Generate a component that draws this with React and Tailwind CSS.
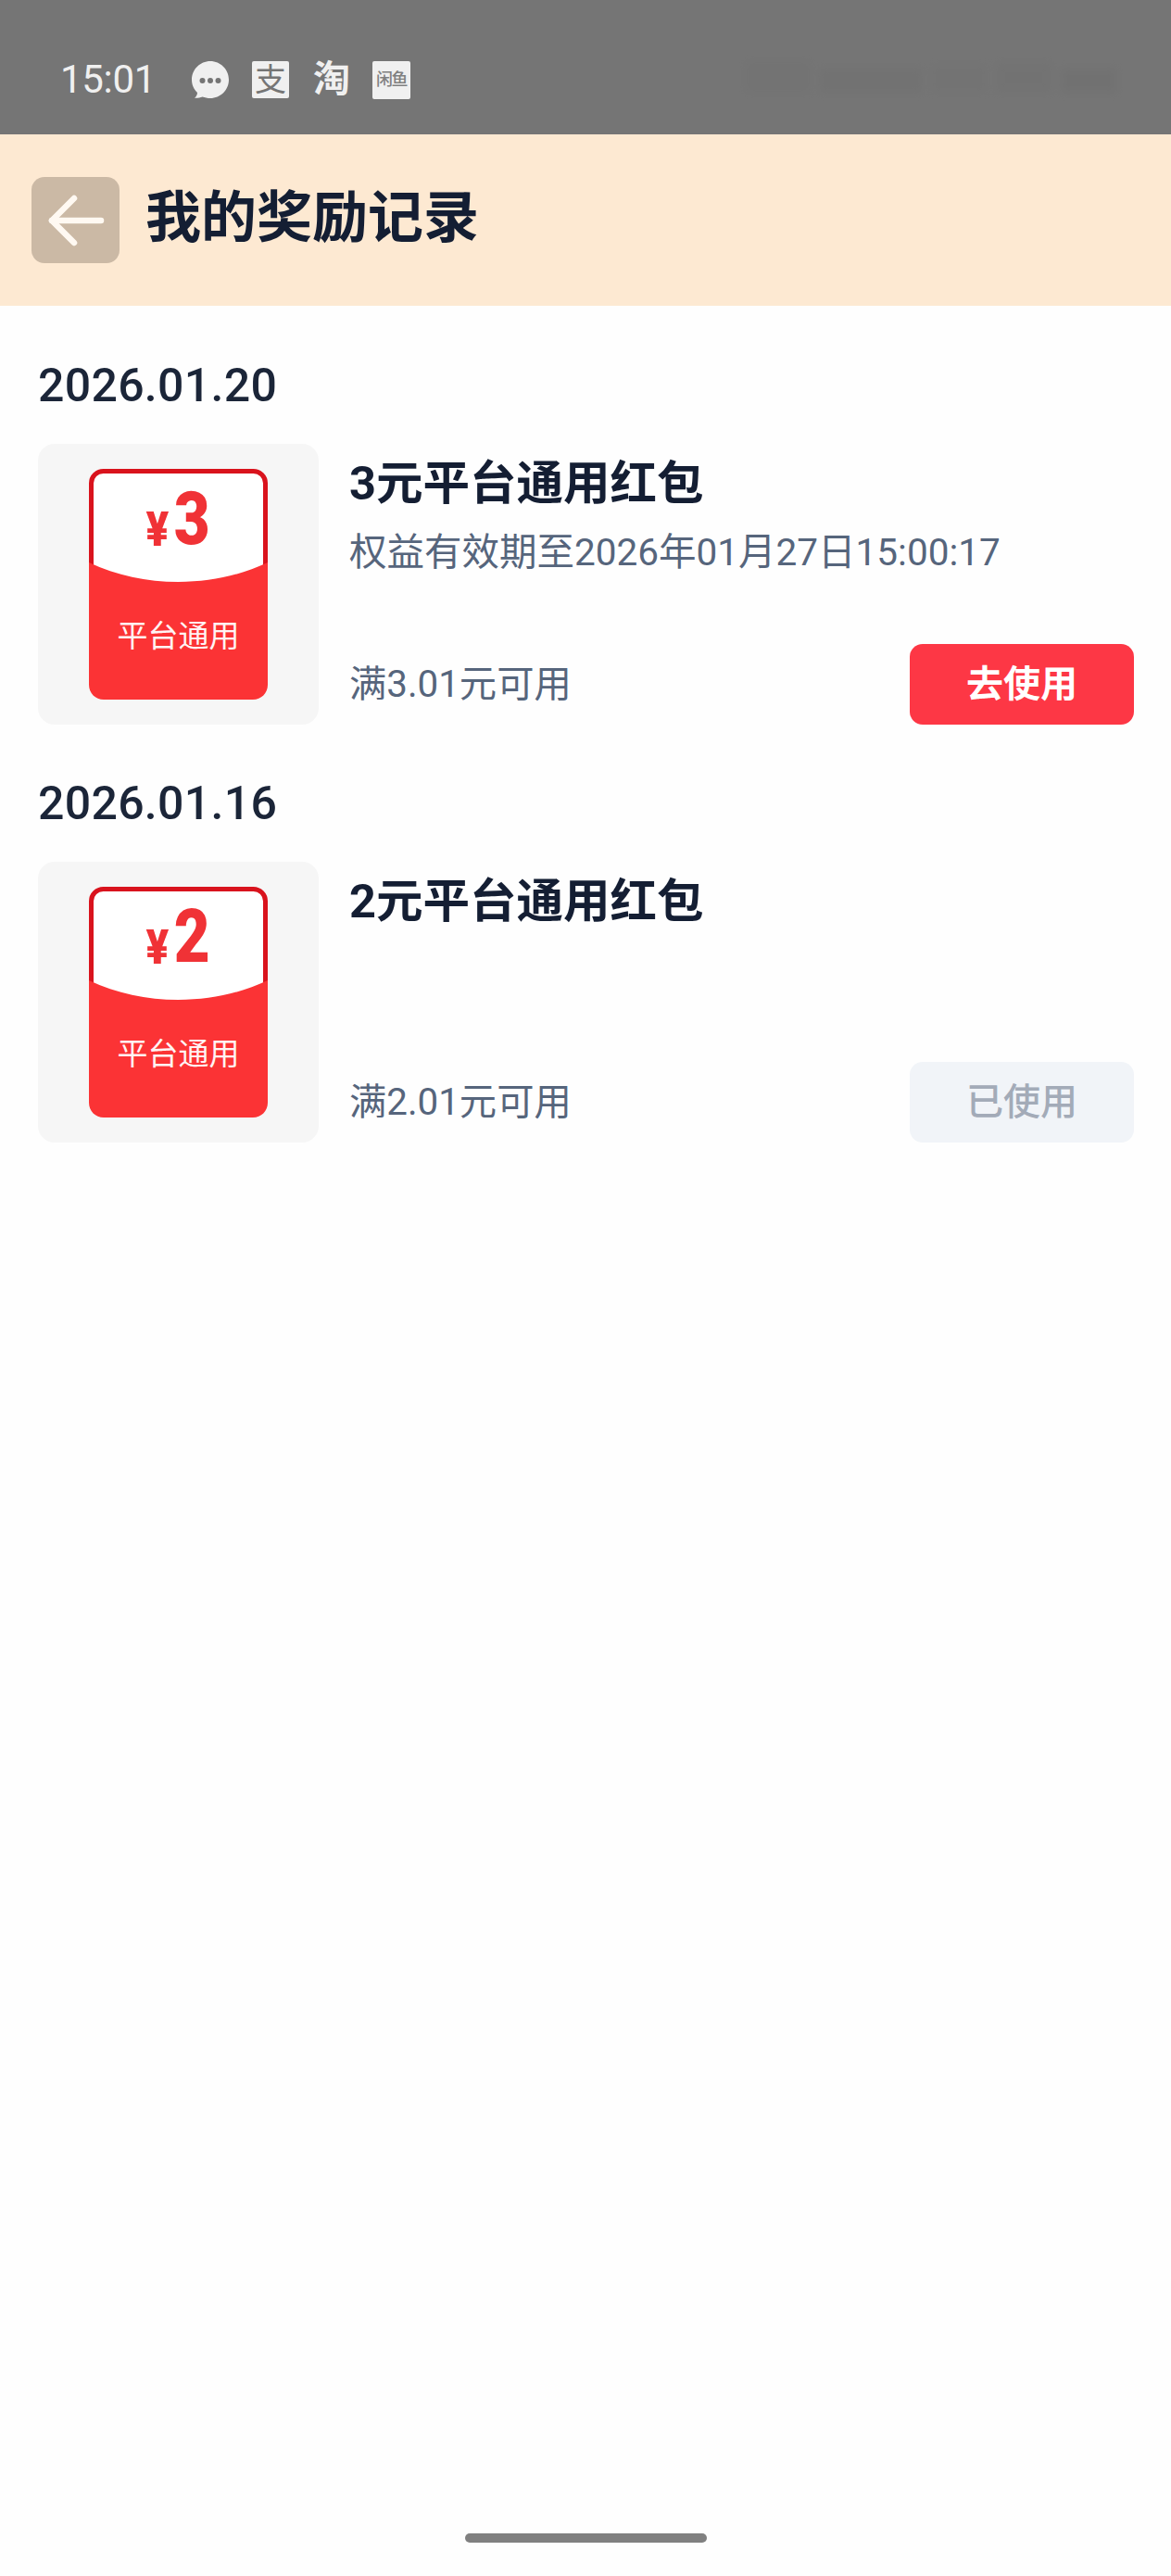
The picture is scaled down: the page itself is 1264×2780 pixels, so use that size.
const records = [
  {
    date: "2026.01.20",
    amount: "3",
    title: "3元平台通用红包",
    expires: "权益有效期至2026年01月27日15:00:17",
    rule: "满3.01元可用",
    used: false,
  },
  {
    date: "2026.01.16",
    amount: "2",
    title: "2元平台通用红包",
    expires: "",
    rule: "满2.01元可用",
    used: true,
  },
];

const StatusBar = () => (
  <div className="relative flex h-[145px] items-center bg-[#757575] pl-[65px] pt-[27px] text-[#f0f0f0]">
    <span className="w-[142px] text-[42px] leading-none tracking-[-0.3px]">15:01</span>
    <svg width="40" height="41" viewBox="0 0 40 41" className="mr-[25px]">
      <path
        d="M20 0C31 0 40 9 40 20C40 31 31 40 20 40C17 40 14 39.4 11.500 38.500C9 39.500 6 40 3 39.800C5 38 6 36 6 34C2.300 30.500 0 25.500 0 20C0 9 9 0 20 0Z"
        fill="#f0f0f0"
      />
      <circle cx="11.500" cy="21" r="3" fill="#757575" />
      <circle cx="20" cy="21" r="3" fill="#757575" />
      <circle cx="28.500" cy="21" r="3" fill="#757575" />
    </svg>
    <span className="mr-[26px] flex h-[40px] w-[40px] items-center justify-center rounded-[2px] bg-[#f0f0f0] text-[34px] leading-none text-[#757575]">
      支
    </span>
    <span className="mr-[24px] w-[40px] text-center text-[40px] font-bold leading-none">淘</span>
    <span className="flex h-[41px] w-[41px] items-center justify-center rounded-[2px] bg-[#f0f0f0] text-[18px] font-medium leading-none tracking-[-1.500px] text-[#808080]">
      闲鱼
    </span>
    {/* faint ghost of the carrier icons on the right */}
    <div className="absolute left-[805px] top-[62px] flex h-[38px] w-[400px] items-end gap-[10px] opacity-30 blur-[4px]">
      <div className="h-[34px] w-[70px] bg-[#6f6f6f]" />
      <div className="h-[26px] w-[110px] bg-[#6c6c6c]" />
      <div className="h-[30px] w-[60px] bg-[#707070]" />
      <div className="h-[32px] w-[60px] bg-[#6e6e6e]" />
      <div className="h-[26px] w-[60px] bg-[#6a6a6a]" />
    </div>
  </div>
);

const Header = () => (
  <div className="flex h-[185px] items-center bg-[#fde9d2] pl-[34px]">
    <div className="flex h-[93px] w-[95px] items-center justify-center rounded-[14px] bg-[#cbb9a5]">
      <svg width="62" height="56" viewBox="0 0 62 56" fill="none" stroke="#fff9f2" strokeWidth="6.500" strokeLinecap="round" strokeLinejoin="round">
        <path d="M58 28H5" />
        <path d="M29 4L5 28L29 52" />
      </svg>
    </div>
    <h1 className="mb-[4px] ml-[28px] text-[60px] font-bold leading-none text-[#141e33]">我的奖励记录</h1>
  </div>
);

const RedPacket = ({ amount }) => (
  <div className="relative flex h-[249px] w-[193px] flex-col items-center">
    <svg width="193" height="249" viewBox="0 0 193 249" className="absolute inset-0">
      <rect x="2.500" y="2.500" width="188" height="130" rx="13" fill="#ffffff" stroke="#d9131d" strokeWidth="5" />
      <path
        d="M0 101C30 115 62 122 96.500 122C131 122 163 115 193 101V233C193 242 186 249 177 249H16C7 249 0 242 0 233Z"
        fill="#fb3335"
      />
    </svg>
    <div className="relative mt-[18px] flex h-[76px] items-end font-black leading-none text-[#f03236]">
      <span className="mb-[2px] origin-right scale-x-[0.88] text-[52px] leading-none">¥</span>
      <span className="ml-[2px] scale-x-[0.84] text-[80px] leading-none">{amount}</span>
    </div>
    <span className="relative mt-[70px] text-[33px] leading-none text-[#fff4f4]">平台通用</span>
  </div>
);

const RecordItem = ({ item }) => (
  <section className="mb-[54px]">
    <p className="h-[60px] pt-[1px] text-[50px] font-medium leading-[60px] tracking-[0.3px] text-[#1b2538]">{item.date}</p>
    <div className="mt-[34px] flex h-[303px]">
      <div className="flex w-[303px] shrink-0 items-center justify-center rounded-[18px] bg-[#f6f6f6]">
        <RedPacket amount={item.amount} />
      </div>
      <div className="ml-[33px] flex min-w-0 flex-1 flex-col pt-[13px]">
        <h2 className="text-[50.500px] font-bold leading-[60px] text-[#141e33]">{item.title}</h2>
        {item.expires && (
          <p className="mt-[19px] text-[40.500px] leading-[50px] text-[#56657c]">{item.expires}</p>
        )}
        <div className="mt-auto flex items-center justify-between">
          <span className="text-[40.300px] leading-[50px] text-[#56657c]">{item.rule}</span>
          {item.used ? (
            <button className="h-[87px] w-[242px] rounded-[14px] bg-[#f1f4f8] text-[40px] font-medium text-[#a3abb8]">
              已使用
            </button>
          ) : (
            <button className="h-[87px] w-[242px] rounded-[14px] bg-[#fd3745] text-[40px] font-bold text-white">
              去使用
            </button>
          )}
        </div>
      </div>
    </div>
  </section>
);

const App = () => (
  <div className="flex h-[2780px] flex-col bg-[#fefefe] font-['Roboto','Noto_Sans_CJK_SC',sans-serif]">
    <StatusBar />
    <Header />
    <main className="flex-1 pl-[41px] pr-[40px] pt-[55px]">
      {records.map((item) => (
        <RecordItem key={item.date} item={item} />
      ))}
    </main>
    <div className="mb-[36px] flex justify-center">
      <div className="h-[10px] w-[261px] rounded-full bg-[#808080]" />
    </div>
  </div>
);

export default App;
